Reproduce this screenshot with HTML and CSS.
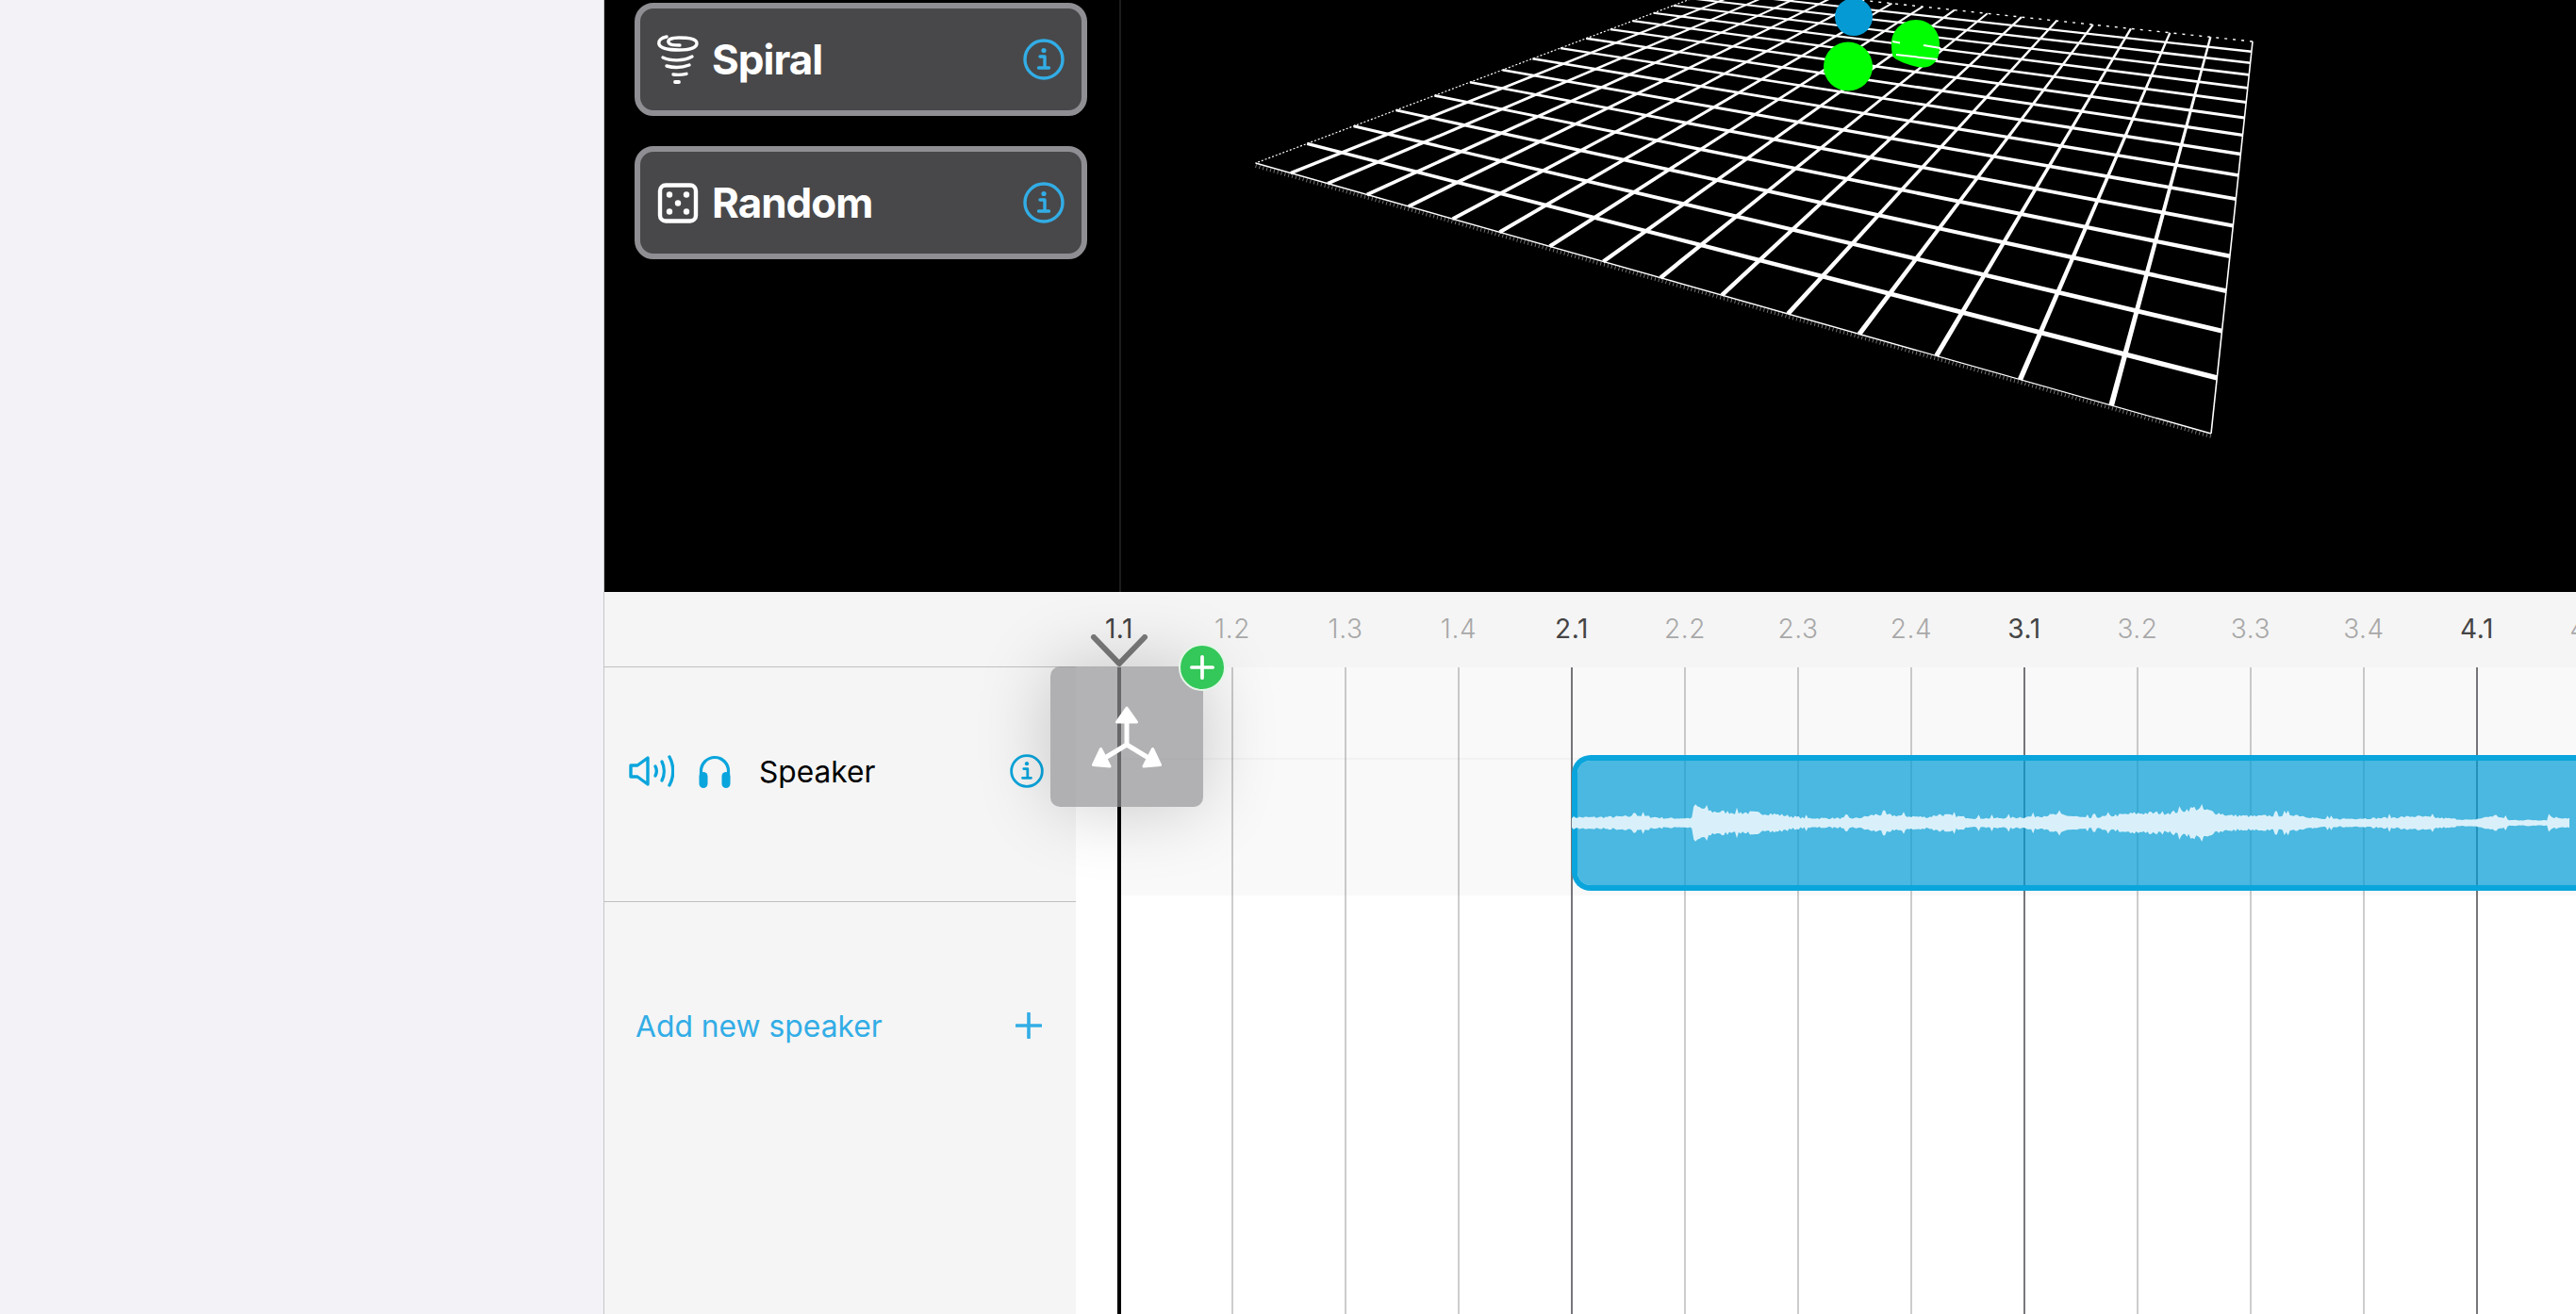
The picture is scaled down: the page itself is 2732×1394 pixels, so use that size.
FILE: index.html
```html
<!DOCTYPE html>
<html lang="en">
<head>
  <meta charset="UTF-8" />
  <meta name="viewport" content="width=device-width, initial-scale=1.0" />
  <title>Speaker Motion</title>
  <link rel="stylesheet" href="styles.css">
</head>
<body>
  <svg class="defs" width="0" height="0">
    <symbol id="info" viewBox="0 0 44 44">
      <circle cx="22" cy="22" r="20" fill="none" stroke="currentColor" stroke-width="3.4" />
      <circle cx="22" cy="12.5" r="2.6" fill="currentColor" />
      <path d="M18 19h5v11.5M16.5 31h11" fill="none" stroke="currentColor" stroke-width="3.4" stroke-linecap="round" stroke-linejoin="round" />
    </symbol>
  </svg>

  <aside class="sidebar"></aside>

  <main class="editor">
    <section class="viewer">
      <div class="presets">
        <button class="preset">
          <svg class="preset-icon" viewBox="0 0 44 52" fill="none" stroke="#fff" stroke-width="3.4" stroke-linecap="round">
            <path d="M10 2C4 3 1 6 2 10c2 5 11 6 21 6 10 0 19-2 19-7 0-5-9-6-19-6-8 0-12 2-11 5 1 3 7 3 12 3" />
            <path d="M6 24c8 4 22 4 31-1" />
            <path d="M10 33c7 2 16 2 24-1" />
            <path d="M17 42c4 .6 9 .5 14-.7" />
            <path d="M19 50h4" stroke-width="3.8" />
          </svg>
          <span class="preset-name">Spiral</span>
          <svg class="preset-info"><use href="#info" /></svg>
        </button>
        <button class="preset">
          <svg class="preset-icon" viewBox="0 0 44 52">
            <rect x="3" y="7.5" width="38" height="38" rx="6" fill="none" stroke="#fff" stroke-width="4.4" />
            <circle cx="13" cy="17.5" r="3.2" fill="#fff" />
            <circle cx="31" cy="17.5" r="3.2" fill="#fff" />
            <circle cx="22" cy="26.5" r="3.2" fill="#fff" />
            <circle cx="13" cy="35.5" r="3.2" fill="#fff" />
            <circle cx="31" cy="35.5" r="3.2" fill="#fff" />
          </svg>
          <span class="preset-name">Random</span>
          <svg class="preset-info"><use href="#info" /></svg>
        </button>
      </div>
      <svg class="stage" viewBox="1189 0 1543 628">
        <g id="floor"></g>
        <circle cx="1966" cy="18" r="20" fill="#059ad4" />
        <circle cx="1960" cy="70.5" r="26" fill="#00ff00" />
        <path d="M2032 21c14 0 25 11 25 25 0 12-1 19-10 24-8 3-16 1-24-2-6-2-16-6-16-10-1-4-1-8-1-12 0-14 12-25 26-25z" fill="#00ff00" />
        <path d="M2007 44l8 1.400M2040 48l18 3M2011 58l44 5" stroke="#fff" stroke-width="2" />
      </svg>
    </section>

    <section class="arrange">
      <div class="ruler">
        <div class="ruler-head"></div>
        <div class="ruler-bars">
          <span class="bar bar-major">1.1</span>
          <span class="bar">1.2</span>
          <span class="bar">1.3</span>
          <span class="bar">1.4</span>
          <span class="bar bar-major">2.1</span>
          <span class="bar">2.2</span>
          <span class="bar">2.3</span>
          <span class="bar">2.4</span>
          <span class="bar bar-major">3.1</span>
          <span class="bar">3.2</span>
          <span class="bar">3.3</span>
          <span class="bar">3.4</span>
          <span class="bar bar-major">4.1</span>
          <span class="bar">4.2</span>
        </div>
      </div>

      <div class="tracks">
        <div class="track-list">
          <div class="track-row">
            <svg class="icon-speaker" viewBox="0 0 48 34" fill="none" stroke="currentColor" stroke-width="3.4" stroke-linecap="round" stroke-linejoin="round">
              <path d="M2 11h7l11-8v28l-11-8H2z" />
              <path d="M28 12c1.600 3 1.600 7 0 10" />
              <path d="M35 7c3 6 3 14 0 20" />
              <path d="M43 2c5 9 5 21 0 30" />
            </svg>
            <svg class="icon-phones" viewBox="0 0 36 36">
              <path d="M3.500 28V18a14.500 14.500 0 0 1 29 0v10" fill="none" stroke="currentColor" stroke-width="3.200" />
              <rect x="1.500" y="19" width="9" height="17" rx="4.500" fill="currentColor" />
              <rect x="25.500" y="19" width="9" height="17" rx="4.500" fill="currentColor" />
            </svg>
            <span class="track-name">Speaker</span>
            <svg class="track-info"><use href="#info" /></svg>
          </div>
          <div class="add-row">
            <span>Add new speaker</span>
            <svg class="add-plus" viewBox="0 0 28 28"><path d="M14 1v26M1 14h26" stroke="currentColor" stroke-width="3.600" stroke-linecap="round" /></svg>
          </div>
        </div>

        <div class="lanes">
          <div class="lane">
            <div class="region"><svg id="wave" class="wave" viewBox="0 0 1065 60"></svg></div>
          </div>
        </div>
      </div>

      <div class="playhead"></div>
      <svg class="playhead-cap" viewBox="0 0 64 36"><path d="M5 3l27 28 27-28" fill="none" stroke="#7a7a7a" stroke-width="6" stroke-linecap="round" stroke-linejoin="round" /></svg>

      <div class="drag-tile">
        <svg class="drag-icon" viewBox="0 0 80 70">
          <path d="M40 4l10.500 15h-21zM12.500 47.500l-8 17 17.500 1.500zM67.500 47.500l8 17-17.500 1.500z" fill="#fff" stroke="#fff" stroke-width="3" stroke-linejoin="round" />
          <path d="M40 18v26M40 43L17 57M40 43l23 14" fill="none" stroke="#fff" stroke-width="5" />
        </svg>
        <span class="drag-badge">
          <svg viewBox="0 0 28 28"><path d="M14 2v24M2 14h24" stroke="#fff" stroke-width="4" stroke-linecap="round" /></svg>
        </span>
      </div>
    </section>
  </main>

  <script src="scene.js"></script>
</body>
</html>
```

FILE: styles.css
```css
* {
  box-sizing: border-box;
}
body {
  margin: 0;
  width: 2732px;
  height: 1394px;
  overflow: hidden;
  display: flex;
  font-family: Inter, "Noto Sans", sans-serif;
  background-color: #f2f2f7;
}
.defs {
  position: absolute;
}
.sidebar {
  width: 641px;
  flex: none;
  background-color: #f2f2f7;
  border-right: 1px solid #c6c6c8;
}
.editor {
  flex: 1;
  display: flex;
  flex-direction: column;
  min-width: 0;
}

/* top: presets and 3d view */
.viewer {
  height: 628px;
  flex: none;
  display: flex;
  background-color: #000;
  overflow: hidden;
}
.presets {
  width: 548px;
  flex: none;
  padding: 3px 32px 0;
  display: flex;
  flex-direction: column;
  gap: 32px;
  border-right: 2px solid #1c1c1e;
}
.preset {
  width: 480px;
  height: 120px;
  padding: 0 18px;
  display: flex;
  align-items: center;
  background-color: #48484a;
  border: 6px solid #8e8e93;
  border-radius: 20px;
  color: #fff;
  font: 700 44px Inter, sans-serif;
}
.preset-icon {
  width: 44px;
  height: 52px;
  margin-right: 14px;
  flex: none;
}
.preset-name {
  flex: 1;
  text-align: left;
  letter-spacing: -1px;
}
.preset-info {
  width: 44px;
  height: 44px;
  color: #32ade6;
}
.stage {
  width: 1543px;
  height: 628px;
  flex: none;
}

/* bottom: ruler and tracks */
.arrange {
  flex: 1;
  position: relative;
  display: flex;
  flex-direction: column;
  overflow: hidden;
  background-color: #fff;
}
.ruler {
  height: 80px;
  flex: none;
  display: flex;
  background-color: #f5f5f5;
}
.ruler-head {
  width: 500px;
  flex: none;
  border-bottom: 1px solid #c0c0c0;
}
.ruler-bars {
  display: flex;
  margin-left: -14px;
}
.bar {
  width: 120px;
  flex: none;
  text-align: center;
  font-size: 28px;
  line-height: 78px;
  font-weight: 300;
  letter-spacing: 0.6px;
  color: #a8a8a8;
}
.bar-major {
  color: #444;
  font-weight: 400;
}
.tracks {
  flex: 1;
  display: flex;
  min-height: 0;
}
.track-list {
  width: 500px;
  flex: none;
  background-color: #f5f5f5;
}
.track-row {
  height: 249px;
  padding: 0 34px 28px 26px;
  display: flex;
  align-items: center;
  border-bottom: 1px solid #c0c0c0;
  color: #0aa5dc;
}
.icon-speaker {
  width: 48px;
  height: 34px;
  margin-right: 25px;
}
.icon-phones {
  width: 36px;
  height: 36px;
  margin-right: 31px;
}
.track-name {
  flex: 1;
  font-size: 31.7px;
  color: #000;
  margin-left: -2px;
}
.track-info {
  width: 36px;
  height: 36px;
  color: #0aa5dc;
}
.add-row {
  height: 262px;
  padding: 0 36px 0 33px;
  display: flex;
  align-items: center;
  justify-content: space-between;
  font-size: 31.8px;
  color: #32ade6;
}
.add-plus {
  width: 28px;
  height: 28px;
}
.lanes {
  flex: 1;
  min-width: 0;
  padding-left: 46px;
  overflow: hidden;
  background-color: #fff;
  background-image:
    linear-gradient(90deg, #77777c 2px, transparent 2px),
    linear-gradient(90deg, #cdcdcd 2px, transparent 2px);
  background-size: 480px 100%, 120px 100%;
  background-position: 45px 0, 45px 0;
  background-repeat: repeat-x;
}
.lane {
  height: 242px;
  padding: 93px 0 0 480px;
  background-image: linear-gradient(
    rgba(0, 0, 0, 0.025) 96px,
    rgba(0, 0, 0, 0.05) 96px,
    rgba(0, 0, 0, 0.05) 98px,
    rgba(0, 0, 0, 0.025) 98px
  );
}
.region {
  height: 144px;
  display: flex;
  align-items: center;
  background-color: rgba(0, 156, 213, 0.7);
  background-clip: padding-box;
  border: 6px solid #0aa5dc;
  border-right: none;
  border-radius: 20px 0 0 20px;
}
.wave {
  width: 100%;
  height: 60px;
  margin-left: -6px;
  overflow: visible;
}

/* things that float over the tracks */
.playhead {
  position: absolute;
  left: 544px;
  top: 80px;
  bottom: 0;
  width: 4px;
  background-color: #000;
}
.playhead-cap {
  position: absolute;
  left: 514px;
  top: 45px;
  width: 64px;
  height: 36px;
}
.drag-tile {
  position: absolute;
  left: 473px;
  top: 79px;
  width: 162px;
  height: 149px;
  display: flex;
  align-items: center;
  justify-content: center;
  background-color: rgba(147, 147, 150, 0.7);
  border-radius: 10px;
  box-shadow: 0 0 80px rgba(0, 0, 0, 0.2);
}
.drag-icon {
  width: 80px;
  height: 70px;
}
.drag-badge {
  position: absolute;
  right: -24px;
  top: -24px;
  width: 50px;
  height: 50px;
  display: flex;
  align-items: center;
  justify-content: center;
  background-color: #34c759;
  border: 2px solid #e4f6e8;
  border-radius: 50%;
}
.drag-badge svg {
  width: 26px;
  height: 26px;
}
```

FILE: scene.js
```js
// floor grid: project a flat 16x16 grid through the four corners seen on screen
const corners = [[1331.6, 173], [2345, 460], [2389, 44], [1830, -15]];
const SVG_NS = 'http://www.w3.org/2000/svg';

function makeProjection([p0, p1, p2, p3]) {
  const dx1 = p1[0] - p2[0], dx2 = p3[0] - p2[0], sx = p0[0] - p1[0] + p2[0] - p3[0];
  const dy1 = p1[1] - p2[1], dy2 = p3[1] - p2[1], sy = p0[1] - p1[1] + p2[1] - p3[1];
  const det = dx1 * dy2 - dx2 * dy1;
  const g = (sx * dy2 - dx2 * sy) / det;
  const h = (dx1 * sy - sx * dy1) / det;
  const a = p1[0] - p0[0] + g * p1[0], b = p3[0] - p0[0] + h * p3[0];
  const d = p1[1] - p0[1] + g * p1[1], e = p3[1] - p0[1] + h * p3[1];
  return (u, v) => {
    const w = g * u + h * v + 1;
    return { x: (a * u + b * v + p0[0]) / w, y: (d * u + e * v + p0[1]) / w, w };
  };
}

const project = makeProjection(corners);
const nearest = project(1, 0).w;
const floorGroup = document.getElementById('floor');

function add(tag, attrs) {
  const el = document.createElementNS(SVG_NS, tag);
  for (const key in attrs) el.setAttribute(key, attrs[key]);
  floorGroup.appendChild(el);
}

function lineWidth(p) {
  return Math.max(1.5, 6 * nearest / p.w);
}

// lines get thinner with depth, so each one is a tapered polygon
function taperedLine(a, b) {
  const wa = lineWidth(a), wb = lineWidth(b);
  const len = Math.hypot(b.x - a.x, b.y - a.y);
  const nx = (a.y - b.y) / len / 2, ny = (b.x - a.x) / len / 2;
  const pts = [
    [a.x + nx * wa, a.y + ny * wa],
    [b.x + nx * wb, b.y + ny * wb],
    [b.x - nx * wb, b.y - ny * wb],
    [a.x - nx * wa, a.y - ny * wa]
  ];
  add('polygon', { points: pts.map(p => p[0].toFixed(1) + ',' + p[1].toFixed(1)).join(' '), fill: '#fff' });
}

for (let i = 1; i < 16; i++) {
  taperedLine(project(i / 16, 0), project(i / 16, 1));
  taperedLine(project(0, i / 16), project(1, i / 16));
}

function edge(p, q, width, dash) {
  const attrs = { x1: p[0], y1: p[1], x2: q[0], y2: q[1], stroke: '#fff', 'stroke-width': width };
  if (dash) attrs['stroke-dasharray'] = dash;
  add('line', attrs);
}
edge(corners[0], corners[1], 1.4);
edge(corners[1], corners[2], 1.6);
edge(corners[2], corners[3], 1.4, '3 6');
edge(corners[3], corners[0], 1.2, '2 2');
// fine aliased fringe under the near edge
add('line', {
  x1: corners[0][0], y1: corners[0][1] + 3, x2: corners[1][0], y2: corners[1][1] + 3,
  stroke: '#fff', 'stroke-width': 4, 'stroke-dasharray': '1 3', opacity: 0.45
});

// waveform: envelope keypoints (x from clip start, half height) plus some noise
const envelope = [
  [0, 6], [30, 6], [64, 7], [67, 14], [70, 8], [100, 5], [128, 5], [130, 18], [150, 12], [210, 10],
  [250, 5], [305, 5], [325, 9], [380, 6], [392, 9], [430, 5], [450, 5], [480, 6], [520, 9], [550, 5],
  [600, 10], [640, 11], [665, 16], [700, 8], [730, 7], [770, 9], [800, 4], [860, 5], [900, 7], [960, 3],
  [985, 8], [1000, 3], [1040, 3], [1042, 9], [1046, 6], [1065, 5]
];

function envelopeAt(x) {
  for (let i = 1; i < envelope.length; i++) {
    if (x <= envelope[i][0]) {
      const [x0, y0] = envelope[i - 1], [x1, y1] = envelope[i];
      return y0 + (y1 - y0) * (x - x0) / (x1 - x0);
    }
  }
  return 5;
}

let seed = 7;
function noise() {
  seed = (seed * 16807) % 2147483647;
  return seed / 2147483647;
}

let upper = '', lower = '';
for (let x = 0; x <= 1065; x += 2) {
  const n = noise();
  const amp = envelopeAt(x) * (0.8 + n * 0.4) + (n > 0.93 ? 3 : 0);
  upper += 'L' + x + ' ' + (30 - amp).toFixed(1);
  lower = 'L' + x + ' ' + (30 + amp).toFixed(1) + lower;
}
const wavePath = document.createElementNS(SVG_NS, 'path');
wavePath.setAttribute('d', 'M' + upper.slice(1) + lower + 'Z');
wavePath.setAttribute('fill', '#d9f0fa');
document.getElementById('wave').appendChild(wavePath);
```
